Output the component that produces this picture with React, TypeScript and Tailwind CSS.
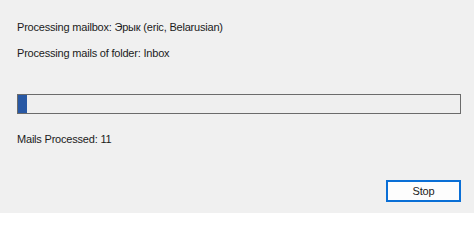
const progress = 2; // percent

export default function App() {
	return (
		<div
			className="w-[474px] h-[213px] bg-[#f0f0f0] text-[#1b1b1b] text-[11px] leading-[14px] tracking-[-0.2px] flex flex-col pl-[17px] pr-[13px] pt-[20px]"
			style={{ fontFamily: '"Liberation Sans", Arial, sans-serif' }}
		>
			<div>Processing mailbox: Эрык (eric, Belarusian)</div>
			<div className="mt-[12px]">Processing mails of folder: Inbox</div>

			{/* Progress bar */}
			<div className="mt-[34px] h-[20px] w-[444px] border border-[#6b6b6b] bg-[#efefef] flex">
				<div className="h-full bg-[#2858a4]" style={{ width: `${progress}%` }} />
			</div>

			<div className="mt-[18px]">Mails Processed: 11</div>

			<div className="flex justify-end mt-[34px]">
				<button className="w-[75px] h-[22px] border-2 border-[#0a6fd6] bg-[#fdfdfd] text-[11px] leading-[14px] text-[#1b1b1b]">
					Stop
				</button>
			</div>
		</div>
	);
}
